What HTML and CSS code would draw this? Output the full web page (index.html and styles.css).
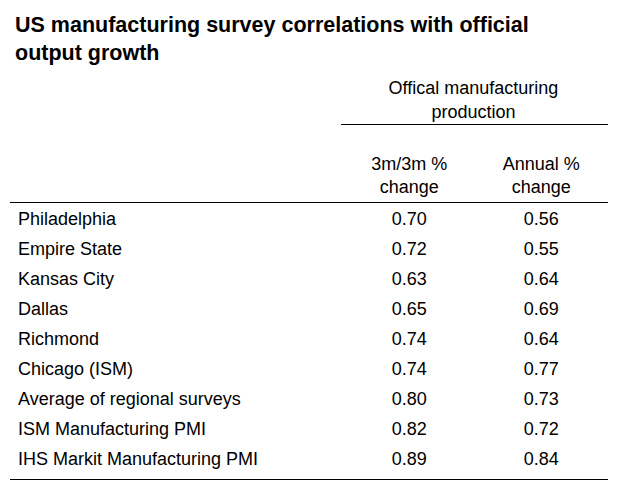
FILE: index.html
```html
<!DOCTYPE html>
<html>
<head>
<meta charset="utf-8">
<link rel="stylesheet" href="styles.css">
</head>
<body>
<div class="page">
  <h1 class="title">US manufacturing survey correlations with official<br>output growth</h1>
  <table class="corr">
    <thead>
      <tr class="group-row">
        <th class="blank"></th>
        <th class="group" colspan="2">Offical manufacturing<br>production</th>
      </tr>
      <tr class="col-row">
        <th class="blank"></th>
        <th class="col col-a">3m/3m %<br>change</th>
        <th class="col col-b">Annual %<br>change</th>
      </tr>
    </thead>
    <tbody>
      <tr><td class="label">Philadelphia</td><td class="num num-a">0.70</td><td class="num">0.56</td></tr>
      <tr><td class="label">Empire State</td><td class="num num-a">0.72</td><td class="num">0.55</td></tr>
      <tr><td class="label">Kansas City</td><td class="num num-a">0.63</td><td class="num">0.64</td></tr>
      <tr><td class="label">Dallas</td><td class="num num-a">0.65</td><td class="num">0.69</td></tr>
      <tr><td class="label">Richmond</td><td class="num num-a">0.74</td><td class="num">0.64</td></tr>
      <tr><td class="label">Chicago (ISM)</td><td class="num num-a">0.74</td><td class="num">0.77</td></tr>
      <tr><td class="label">Average of regional surveys</td><td class="num num-a">0.80</td><td class="num">0.73</td></tr>
      <tr><td class="label">ISM Manufacturing PMI</td><td class="num num-a">0.82</td><td class="num">0.72</td></tr>
      <tr><td class="label">IHS Markit Manufacturing PMI</td><td class="num num-a">0.89</td><td class="num">0.84</td></tr>
    </tbody>
  </table>
</div>
</body>
</html>
```

FILE: styles.css
```css
html, body {
  margin: 0;
  padding: 0;
  background: #ffffff;
}
body {
  font-family: "Liberation Sans", Arial, sans-serif;
  color: #000000;
}
.page {
  width: 628px;
  height: 498px;
  padding: 11px 0 0 0;
  box-sizing: border-box;
}
.title {
  margin: 0 0 0 15px;
  font-size: 21.5px;
  line-height: 28px;
  font-weight: bold;
  white-space: nowrap;
}
.corr {
  margin: 9px 0 0 10px;
  width: 598px;
  table-layout: fixed;
  border-collapse: collapse;
  font-size: 18px;
}
.corr th, .corr td {
  padding: 0;
  font-weight: normal;
}
.corr .blank {
  width: 331px;
}
.corr .group {
  text-align: center;
  line-height: 24px;
  padding-right: 2px;
  border-bottom: 1px solid #000;
}
.corr .col-row th {
  padding-top: 28px;
  padding-bottom: 3px;
  line-height: 23px;
  text-align: center;
  border-bottom: 1px solid #000;
}
.corr .col-row th.col-a {
  width: 141px;
  padding-left: 3px;
}
.corr .col-b {
  width: 126px;
}
.corr tbody td {
  line-height: 30px;
}
.corr tbody tr:first-child td {
  padding-top: 1px;
}
.corr tbody tr:last-child td {
  padding-bottom: 5px;
  border-bottom: 1px solid #000;
}
.corr td.label {
  padding-left: 8px;
  text-align: left;
}
.corr td.num {
  text-align: center;
}
.corr td.num-a {
  padding-left: 3px;
}
```
